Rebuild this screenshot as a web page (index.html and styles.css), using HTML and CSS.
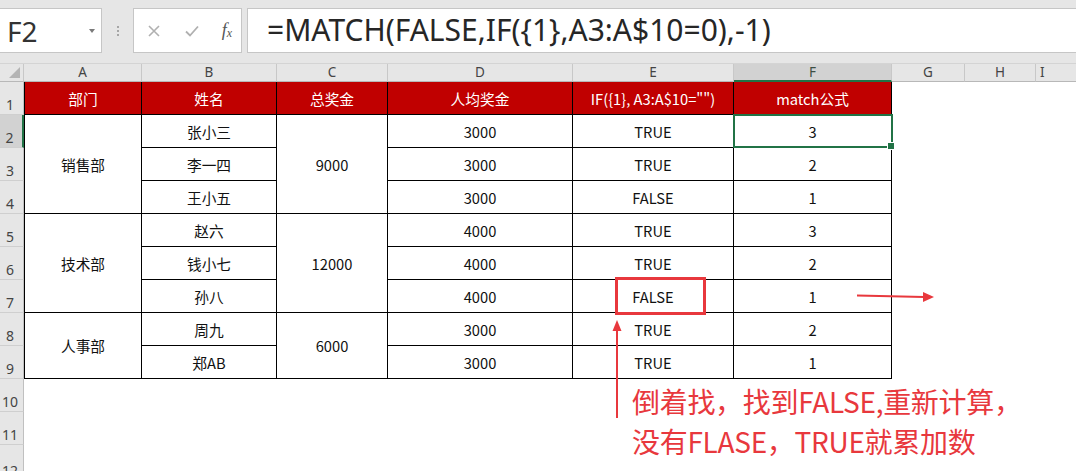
FILE: index.html
```html
<!DOCTYPE html>
<html lang="zh">
<head>
<meta charset="utf-8">
<title>MATCH</title>
<link rel="stylesheet" href="styles.css">
</head>
<body>
<div class="page">
  <div class="topbar">
    <div class="namebox"><span class="nb-text">F2</span><span class="nb-arrow"></span></div>
    <div class="grip"><i></i><i></i><i></i></div>
    <div class="btnbox">
      <svg class="ic" width="16" height="16" viewBox="0 0 16 16"><path d="M3 3 L13 13 M13 3 L3 13" stroke="#b0b0b0" stroke-width="1.6" fill="none"/></svg>
      <svg class="ic" width="16" height="16" viewBox="0 0 16 16"><path d="M2 8.5 L6 12.5 L14 3.5" stroke="#b0b0b0" stroke-width="1.8" fill="none"/></svg>
      <span class="fx">f<sub>x</sub></span>
    </div>
    <div class="formula">=MATCH(FALSE,IF({1},A3:A$10=0),-1)</div>
  </div>

  <div class="sheet">
    <div class="corner"><span class="tri"></span></div>
    <div class="ch">A</div><div class="ch">B</div><div class="ch">C</div><div class="ch">D</div><div class="ch">E</div><div class="ch sel">F</div><div class="ch">G</div><div class="ch">H</div><div class="ch ch-last">I</div>

    <div class="rh">1</div>
    <div class="c hd first">部门</div><div class="c hd">姓名</div><div class="c hd">总奖金</div><div class="c hd">人均奖金</div><div class="c hd">IF({1}, A3:A$10="")</div><div class="c hd">match公式</div><div class="e"></div><div class="e"></div><div class="e"></div>

    <div class="rh rsel">2</div>
    <div class="c first span3">销售部</div><div class="c">张小三</div><div class="c span3">9000</div><div class="c">3000</div><div class="c">TRUE</div><div class="c active">3</div><div class="e"></div><div class="e"></div><div class="e"></div>

    <div class="rh">3</div>
    <div class="c">李一四</div><div class="c">3000</div><div class="c">TRUE</div><div class="c">2</div><div class="e"></div><div class="e"></div><div class="e"></div>

    <div class="rh">4</div>
    <div class="c">王小五</div><div class="c">3000</div><div class="c">FALSE</div><div class="c">1</div><div class="e"></div><div class="e"></div><div class="e"></div>

    <div class="rh">5</div>
    <div class="c first span3">技术部</div><div class="c">赵六</div><div class="c span3">12000</div><div class="c">4000</div><div class="c">TRUE</div><div class="c">3</div><div class="e"></div><div class="e"></div><div class="e"></div>

    <div class="rh">6</div>
    <div class="c">钱小七</div><div class="c">4000</div><div class="c">TRUE</div><div class="c">2</div><div class="e"></div><div class="e"></div><div class="e"></div>

    <div class="rh">7</div>
    <div class="c">孙八</div><div class="c">4000</div><div class="c">FALSE</div><div class="c">1</div><div class="e"></div><div class="e"></div><div class="e"></div>

    <div class="rh">8</div>
    <div class="c first span2">人事部</div><div class="c">周九</div><div class="c span2">6000</div><div class="c">3000</div><div class="c">TRUE</div><div class="c">2</div><div class="e"></div><div class="e"></div><div class="e"></div>

    <div class="rh">9</div>
    <div class="c">郑AB</div><div class="c">3000</div><div class="c">TRUE</div><div class="c">1</div><div class="e"></div><div class="e"></div><div class="e"></div>

    <div class="rh">10</div><div class="blank"></div>
    <div class="rh">11</div><div class="blank"></div>
    <div class="rh rh-cut">12</div><div class="blank"></div>
  </div>

  <svg class="marks" width="1076" height="471" viewBox="0 0 1076 471">
    <rect x="616.5" y="278.5" width="88" height="35" fill="none" stroke="#e8383d" stroke-width="3"/>
    <line x1="617" y1="418" x2="617" y2="330" stroke="#e8383d" stroke-width="2"/>
    <path d="M612.5 331 L617 320 L621.5 331 Z" fill="#e8383d"/>
    <line x1="857" y1="295.5" x2="924" y2="297" stroke="#e8383d" stroke-width="2"/>
    <path d="M923 292 L934 297 L923 302 Z" fill="#e8383d"/>
  </svg>
  <div class="note">倒着找，找到FALSE,重新计算，<br>没有FLASE，TRUE就累加数</div>
</div>
</body>
</html>
```
FILE: styles.css
```css
* { box-sizing: border-box; }
html, body { margin: 0; padding: 0; background: #fff; }
body { width: 1076px; height: 471px; overflow: hidden; font-family: "Noto Sans CJK SC", "Noto Sans", sans-serif; }
.page { position: relative; width: 1076px; height: 471px; overflow: hidden; }

.topbar { height: 64px; background: #e6e6e6; display: flex; align-items: flex-start; padding-top: 8px; border-bottom: 1px solid #d4d4d4; }
.namebox { width: 102px; height: 45px; background: #fff; border: 1px solid #c6c6c6; border-left: none; display: flex; align-items: center; justify-content: space-between; padding: 0 6px 0 7px; }
.nb-text { font-family: "Noto Sans", sans-serif; font-size: 28px; color: #333; }
.nb-arrow { width: 0; height: 0; border-left: 3.5px solid transparent; border-right: 3.5px solid transparent; border-top: 4px solid #7a7a7a; }
.grip { width: 31px; height: 45px; display: flex; flex-direction: column; align-items: center; justify-content: center; gap: 2px; }
.grip i { width: 2px; height: 2px; background: #a6a6a6; display: block; }
.btnbox { width: 109px; height: 45px; background: #fff; border: 1px solid #c6c6c6; display: flex; align-items: center; justify-content: space-between; padding: 0 9px 0 12px; }
.fx { font-family: "Liberation Serif", serif; font-style: italic; font-size: 18px; color: #555; }
.fx sub { font-size: 12px; vertical-align: -1px; }
.formula { flex: 1; height: 45px; margin-left: 5px; background: #fff; border: 1px solid #c6c6c6; border-right: none; font-family: "Noto Sans", sans-serif; font-size: 30px; color: #262626; line-height: 42px; padding-left: 19px; }

.sheet { display: grid; grid-template-columns: 24px 118px 135px 111px 185px 161px 158px 73px 71px 1fr; grid-template-rows: 18px repeat(12, 33px); }
.corner { background: #e6e6e6; border-right: 1px solid #c8c8c8; border-bottom: 1px solid #b8b8b8; position: relative; }
.tri { position: absolute; right: 3px; bottom: 3px; width: 0; height: 0; border-left: 11px solid transparent; border-bottom: 11px solid #b4b4b4; }
.ch { background: #e6e6e6; border-right: 1px solid #c8c8c8; border-bottom: 1px solid #b8b8b8; font-family: "Noto Sans", sans-serif; font-size: 13.5px; color: #444; display: flex; align-items: center; justify-content: center; line-height: 1; padding-top: 1px; }
.ch.sel { background: #d2d2d2; border-bottom: 2px solid #217346; color: #3d4f43; }
.ch-last { border-right: none; justify-content: flex-start; padding-left: 4px; }

.rh { background: #e6e6e6; border-bottom: 1px solid #cfcfcf; border-right: 1px solid #c0c0c0; font-family: "Noto Sans", sans-serif; font-size: 14px; color: #444; display: flex; align-items: flex-end; justify-content: center; padding-right: 3px; line-height: 1; padding-bottom: 2px; grid-column: 1; }
.rh.rsel { background: #d2d2d2; border-right: 2px solid #217346; }
.rh-cut { align-items: flex-start; padding-top: 19px; padding-bottom: 0; }

.c { border-right: 1px solid #000; border-bottom: 1px solid #000; display: flex; align-items: center; justify-content: center; font-size: 14.7px; color: #111; background: #fff; }
.c.first { border-left: 1px solid #000; }
.c.hd { background: #c00000; color: #fff; }
.span3 { grid-row: span 3; }
.span2 { grid-row: span 2; }
.c.active { position: relative; }
.c.active::after { content: ""; position: absolute; left: -1px; top: -1px; right: -2px; bottom: -1px; border: 2px solid #217346; }
.c.active::before { content: ""; position: absolute; right: -4px; bottom: -3px; width: 6px; height: 6px; background: #217346; border: 1px solid #fff; z-index: 2; }
.e { background: #fff; }
.blank { grid-column: 2 / -1; background: #fff; }

.marks { position: absolute; left: 0; top: 0; pointer-events: none; }
.note { position: absolute; left: 632px; top: 381px; font-size: 28px; line-height: 40px; color: #e8383d; white-space: nowrap; letter-spacing: -0.3px; }
```
